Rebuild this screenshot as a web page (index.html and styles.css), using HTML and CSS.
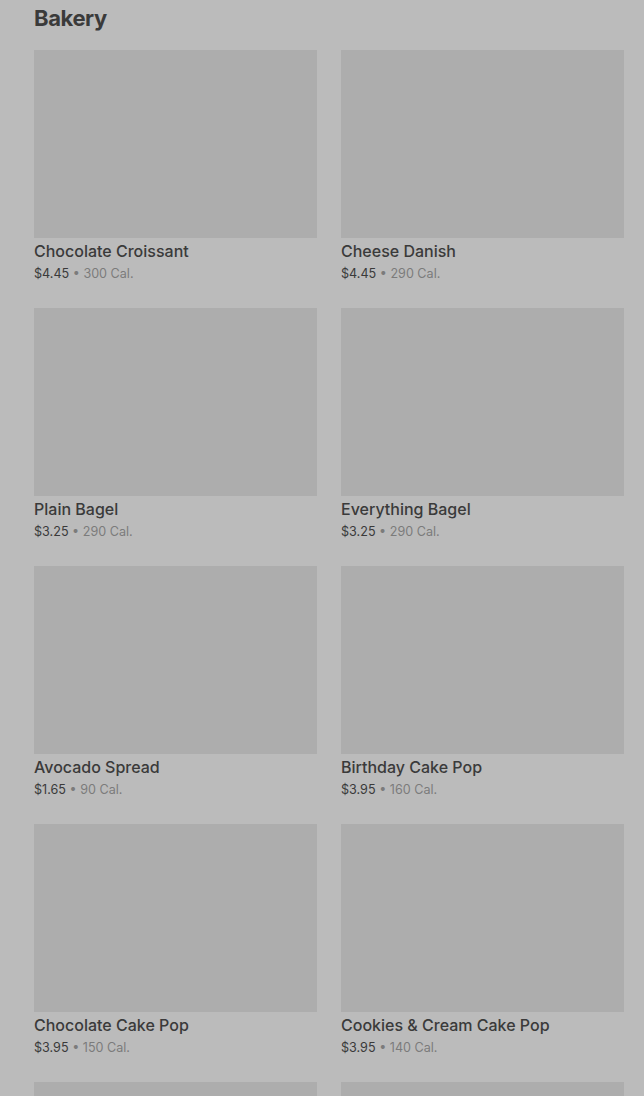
FILE: index.html
```html
<!DOCTYPE html>
<html lang="en">
<head>
    <meta charset="UTF-8">
    <meta name="viewport" content="width=device-width, initial-scale=1.0">
    <title>Bakery</title>
    <link rel="stylesheet" href="styles.css">
</head>
<body>
    <h2 class="section-title">Bakery</h2>

    <div class="menu-grid">
        <div class="item">
            <div class="item-image"></div>
            <div class="item-name">Chocolate Croissant</div>
            <div class="item-meta"><span class="price">$4.45</span> • 300 Cal.</div>
        </div>
        <div class="item">
            <div class="item-image"></div>
            <div class="item-name">Cheese Danish</div>
            <div class="item-meta"><span class="price">$4.45</span> • 290 Cal.</div>
        </div>
        <div class="item">
            <div class="item-image"></div>
            <div class="item-name">Plain Bagel</div>
            <div class="item-meta"><span class="price">$3.25</span> • 290 Cal.</div>
        </div>
        <div class="item">
            <div class="item-image"></div>
            <div class="item-name">Everything Bagel</div>
            <div class="item-meta"><span class="price">$3.25</span> • 290 Cal.</div>
        </div>
        <div class="item">
            <div class="item-image"></div>
            <div class="item-name">Avocado Spread</div>
            <div class="item-meta"><span class="price">$1.65</span> • 90 Cal.</div>
        </div>
        <div class="item">
            <div class="item-image"></div>
            <div class="item-name">Birthday Cake Pop</div>
            <div class="item-meta"><span class="price">$3.95</span> • 160 Cal.</div>
        </div>
        <div class="item">
            <div class="item-image"></div>
            <div class="item-name">Chocolate Cake Pop</div>
            <div class="item-meta"><span class="price">$3.95</span> • 150 Cal.</div>
        </div>
        <div class="item">
            <div class="item-image"></div>
            <div class="item-name">Cookies &amp; Cream Cake Pop</div>
            <div class="item-meta"><span class="price">$3.95</span> • 140 Cal.</div>
        </div>
        <div class="item">
            <div class="item-image"></div>
        </div>
        <div class="item">
            <div class="item-image"></div>
        </div>
    </div>
</body>
</html>
```

FILE: styles.css
```css
body {
    margin: 0;
    padding: 0 20px 0 34px;
    background-color: #bbbbbb;
    font-family: Inter, Roboto, "Liberation Sans", sans-serif;
    color: #383838;
}
.section-title {
    margin: 0;
    padding-top: 3px;
    font-size: 22px;
    line-height: 30px;
    font-weight: 700;
    letter-spacing: -0.4px;
    color: #3a3a3a;
}
.menu-grid {
    display: grid;
    grid-template-columns: 283px 283px;
    column-gap: 24px;
    row-gap: 26px;
    margin-top: 17px;
}
.item-image {
    height: 188px;
    background-color: #adadad;
}
.item-name {
    margin-top: 3px;
    font-size: 16px;
    line-height: 20px;
    font-weight: 500;
    color: #3a3a3a;
}
.item-meta {
    margin-top: 4px;
    font-size: 12.6px;
    line-height: 17px;
    color: #7b7b7b;
}
.price {
    color: #3a3a3a;
}
```
